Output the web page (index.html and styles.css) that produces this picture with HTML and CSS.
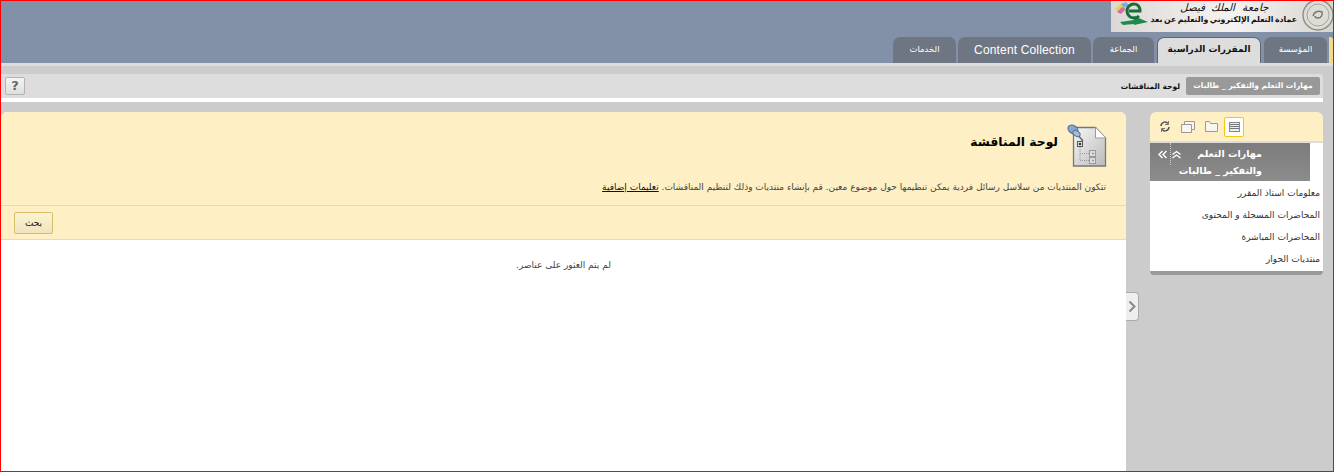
FILE: index.html

```html
<!DOCTYPE html>
<html lang="ar" dir="rtl">
<head>
<meta charset="utf-8">
<title>لوحة المناقشة</title>
<link rel="stylesheet" href="styles.css">
</head>
<body>
<div class="frame">

<div class="header">
  <div class="logo-row">
    <div class="logo">
      <svg class="seal" width="32" height="31" viewBox="0 0 32 31">
        <circle cx="17" cy="14" r="15" fill="#dedcd6" stroke="#8c8c84" stroke-width="1.4"/>
        <circle cx="17" cy="14" r="11" fill="none" stroke="#a5a59c"/>
        <path d="M12 15c1-4 5-6 9-4 1 3-1 6-4 6-2 0-3-1-3-2" fill="none" stroke="#77776f" stroke-width="1.400"/>
      </svg>
      <div class="logo-text">
        <div class="logo-uni">جامعة الملك فيصل</div>
        <div class="logo-dept">عمادة التعلم الإلكتروني والتعليم عن بعد</div>
      </div>
      <svg class="elogo" width="38" height="30" viewBox="0 0 38 30">
        <path d="M4 8l7-6 4 2-7 7z" fill="#e6d25a"/>
        <path d="M6 11l5-5 4 2-5 5z" fill="#d86aa8"/>
        <path d="M10 3l5-2 3 3-5 3z" fill="#6cb6d8"/>
        <path d="M9 21l14-2v-4l14 6-14 3v-1l-11 1z" fill="#1d8a4c"/>
        <path d="M18 10h11c0-4-2-7-6-7s-7 3-7 7 3 7 7 7c2 0 4-1 5-2" fill="none" stroke="#176e3a" stroke-width="3"/>
      </svg>
    </div>
  </div>
  <ul class="tabs">
    <li class="tab tab-stub"></li>
    <li class="tab tab-inst">المؤسسة</li>
    <li class="tab tab-active">المقررات الدراسية</li>
    <li class="tab tab-group">الجماعة</li>
    <li class="tab tab-cc">Content Collection</li>
    <li class="tab tab-serv">الخدمات</li>
  </ul>
</div>

<div class="strip"></div>
<div class="crumbs">
  <span class="crumb-course">مهارات التعلم والتفكير _ طالبات</span>
  <span class="crumb-page">لوحة المناقشات</span>
  <span class="help">?</span>
</div>
<div class="white-line"></div>

<div class="main">
  <div class="side">
    <div class="side-tools">
      <span class="tool tool-on">
        <svg width="11" height="10" viewBox="0 0 11 10"><rect x=".5" y=".5" width="10" height="9" fill="#eee" stroke="#888"/><path d="M1 2.500h9M1 4.500h9M1 6.500h9" stroke="#777" fill="none"/></svg>
      </span>
      <span class="tool">
        <svg width="13" height="11" viewBox="0 0 13 11"><path d="M.5 2.500V.5h4l1 2h7v8H.5z" fill="#f8f6ee" stroke="#999"/></svg>
      </span>
      <span class="tool">
        <svg width="14" height="12" viewBox="0 0 14 12"><path d="M3.500 3V.5h10v8H11" fill="#f8f6ee" stroke="#999"/><path d="M.5 3.500h10v8H.5z" fill="#f8f6ee" stroke="#999"/></svg>
      </span>
      <span class="tool">
        <svg width="10" height="11" viewBox="0 0 10 11"><path d="M1 5a4 4 0 0 1 7-2.500M9 6a4 4 0 0 1-7 2.500" fill="none" stroke="#555" stroke-width="1.500"/><path d="M8.500 0v3.500H5M1.500 11V7.500H5" fill="none" stroke="#777"/></svg>
      </span>
    </div>
    <div class="side-body">
      <div class="course-title">
        <div class="course-name">مهارات التعلم<br>والتفكير _ طالبات</div>
        <div class="course-ctrl">
          <svg class="ctrl-up" width="11" height="9" viewBox="0 0 11 9"><path d="M1.500 4.500l4-3 4 3M1.500 8l4-3 4 3" fill="none" stroke="#fff" stroke-width="1.400"/></svg>
          <span class="ctrl-side">
            <svg width="9" height="9" viewBox="0 0 9 9"><path d="M4.500 1l-3.500 3.500 3.500 3.500M8.500 1L5 4.500 8.500 8" fill="none" stroke="#fff" stroke-width="1.400"/></svg>
          </span>
        </div>
      </div>
      <ul class="side-menu">
        <li>معلومات استاذ المقرر</li>
        <li>المحاضرات المسجلة و المحتوى</li>
        <li>المحاضرات المباشرة</li>
        <li>منتديات الحوار</li>
      </ul>
    </div>
  </div>

  <div class="handle-col">
    <span class="handle">
      <svg width="8" height="13" viewBox="0 0 8 13"><path d="M1.500 1.500l5 5-5 5" fill="none" stroke="#888" stroke-width="2"/></svg>
    </span>
  </div>

  <div class="panel">
    <div class="panel-head">
      <div class="title-row">
        <svg class="board-icon" width="40" height="44" viewBox="0 0 40 44">
          <defs>
            <linearGradient id="sheet" x1="0" y1="0" x2="1" y2="1"><stop offset="0" stop-color="#f6f6f6"/><stop offset="1" stop-color="#bbb"/></linearGradient>
          </defs>
          <path d="M6.500 3.500h22l10 10.500v28h-32z" fill="url(#sheet)" stroke="#777" stroke-width="1.300"/>
          <path d="M28.500 3.500v10.500h10" fill="#fff" stroke="#999"/>
          <rect x="10.500" y="17.500" width="5" height="5" fill="#fff" stroke="#555"/>
          <path d="M11.500 20h3M13 18.500v3" stroke="#000"/>
          <path d="M13 23v14M13 29.500h9M13 36.500h9" stroke="#999" stroke-dasharray="1 1" fill="none"/>
          <rect x="22.500" y="26.500" width="6" height="6" fill="#ddd" stroke="#999"/>
          <rect x="22.500" y="33.500" width="6" height="6" fill="#ddd" stroke="#999"/>
          <path d="M25 29.500h2M26 28.500v2M25 36.500h2M26 35.500v2" stroke="#999"/>
          <path d="M10 10l6 7" stroke="#666" stroke-width="1.500"/>
          <ellipse cx="6" cy="5.500" rx="5.500" ry="4" transform="rotate(35 6 5.500)" fill="#86a6d0" stroke="#566f90"/>
          <ellipse cx="9.500" cy="9.500" rx="4" ry="2.500" transform="rotate(35 9.500 9.500)" fill="#a3bcd8" stroke="#566f90"/>
        </svg>
        <h1 class="page-title">لوحة المناقشة</h1>
      </div>
      <p class="page-note">تتكون المنتديات من سلاسل رسائل فردية يمكن تنظيمها حول موضوع معين. قم بإنشاء منتديات وذلك لتنظيم المناقشات. <a href="#">تعليمات إضافية</a></p>
    </div>
    <div class="action-bar">
      <button class="search-btn" type="button">بحث</button>
    </div>
    <div class="panel-body">
      <p class="empty">لم يتم العثور على عناصر.</p>
    </div>
  </div>
</div>

</div>
</body>
</html>
```

FILE: styles.css

```css
html, body { margin: 0; padding: 0; height: 100%; }
body { font-family: "DejaVu Sans", "Liberation Sans", sans-serif; font-size: 9px; color: #333; overflow: hidden; }
ul { list-style: none; margin: 0; padding: 0; }
h1, p { margin: 0; }

.frame {
  box-sizing: border-box;
  height: 472px;
  border: 1px solid #f00;
  display: flex;
  flex-direction: column;
  background: #ccc;
}

/* ----------- header ----------- */
.header { height: 62px; background: #8291a8; display: flex; flex-direction: column; justify-content: space-between; flex: none; }
.logo-row { display: flex; }
.logo {
  width: 222px;
  height: 31px;
  background: linear-gradient(to left, #d8d5d0, #f5f3f2 45%, #dcd8d6);
  display: flex;
  overflow: hidden;
}
.seal { flex: none; }
.logo-text { width: 146px; flex: none; margin-right: 4px; text-align: center; color: #111; }
.logo-uni { font-family: "DejaVu Serif", serif; font-size: 10.500px; line-height: 12px; font-style: italic; word-spacing: 3px; white-space: nowrap; }
.logo-dept { font-size: 7.800px; font-weight: bold; line-height: 14px; word-spacing: -1.200px; white-space: nowrap; }
.elogo { flex: none; margin-right: 2px; }

.tabs { display: flex; height: 26px; gap: 3px; }
.tab {
  box-sizing: border-box;
  background: #6e7683;
  color: #fff;
  border-radius: 7px 7px 0 0;
  text-align: center;
  line-height: 25px;
  font-size: 8.500px;
  white-space: nowrap;
}
.tab-stub { width: 4px; margin-left: -1px; background: #f4d98a; border-radius: 0 3px 0 0; }
.tab-inst { width: 63px; }
.tab-active { width: 104px; background: #ddd; color: #111; font-size: 9px; font-weight: bold; border: 1px solid #5f6771; border-bottom: 0; line-height: 23px; }
.tab-group { width: 61px; margin-left: -1px; }
.tab-cc { width: 133px; margin-left: -1px; font-family: "Liberation Sans", sans-serif; font-size: 12px; letter-spacing: .15px; line-height: 26px; }
.tab-serv { width: 63px; }

/* ----------- breadcrumb ----------- */
.strip { height: 11px; flex: none; background: #ccc; border-top: 3px solid #ddd; box-sizing: border-box; }
.crumbs {
  height: 24px;
  flex: none;
  background: #ddd;
  border-radius: 0 3px 0 0;
  margin-right: 10px;
  display: flex;
  align-items: center;
  padding: 0 3px 0 4px;
  color: #111;
  font-size: 7.500px;
  font-weight: bold;
}
.crumb-course { width: 134px; text-align: center; background: #999; color: #fff; border-radius: 2px; height: 18px; line-height: 18px; margin-left: 6px; white-space: nowrap; }
.help {
  margin-right: auto;
  width: 20px;
  height: 18px;
  box-sizing: border-box;
  border: 1px solid #b4b4b4;
  border-radius: 2px;
  background: linear-gradient(#f4f4f4, #dedede);
  color: #666;
  font: bold 13px/16px "DejaVu Sans", sans-serif;
  text-align: center;
}
.white-line { height: 4px; flex: none; background: #fff; margin-right: 10px; }

/* ----------- main ----------- */
.main { flex: 1; display: flex; min-height: 0; padding-top: 10px; }

.side { width: 173px; flex: none; margin-right: 10px; align-self: flex-start; }
.side-tools {
  height: 31px;
  background: #feefc4;
  border-radius: 6px 6px 0 0;
  display: flex;
  align-items: center;
  justify-content: flex-end;
  padding: 0 0 0 5px;
  gap: 3px;
  border-bottom: 2px solid #ddd;
  box-sizing: border-box;
}
.tool { width: 20px; height: 20px; display: flex; align-items: center; justify-content: center; box-sizing: border-box; }
.tool-on { border: 1px solid #f5c518; border-radius: 2px; background: #fff; }
.side-body { background: #fff; border-bottom: 4px solid #999; border-radius: 0 0 4px 4px; }
.course-title {
  margin-right: 13px;
  height: 38px;
  background: linear-gradient(#7c7c7c, #8c8c8c);
  color: #fff;
  display: flex;
  font-weight: bold;
  font-size: 9.500px;
  line-height: 17px;
}
.course-name { flex: 1; min-width: 0; padding: 2px 48px 0 0; white-space: nowrap; }
.course-ctrl { flex: none; display: flex; align-items: center; height: 22px; padding-left: 4px; }
.ctrl-up { flex: none; }
.ctrl-side { display: flex; align-items: center; justify-content: center; width: 17px; height: 22px; box-sizing: border-box; border-right: 1px dotted #ccc; }
.side-menu { padding: 1px 0; }
.side-menu li { height: 22px; line-height: 22px; padding-right: 3px; color: #333; font-size: 9px; white-space: nowrap; }

.handle-col { width: 24px; flex: none; }
.handle {
  display: flex;
  align-items: center;
  justify-content: center;
  width: 13px;
  height: 29px;
  margin-top: 180px;
  margin-right: 11px;
  background: #eee;
  border: 1px solid #aaa;
  border-left: 0;
  border-radius: 0 4px 4px 0;
  box-sizing: border-box;
}

.panel { flex: 1; min-width: 0; display: flex; flex-direction: column; background: #fff; border-radius: 6px 6px 0 0; }
.panel-head { background: #feefc4; height: 94px; padding: 12px 20px 0 0; box-sizing: border-box; border-bottom: 1px solid #eddc9e; border-radius: 6px 6px 0 0; }
.title-row { display: flex; align-items: center; height: 44px; }
.page-title { font-size: 12.300px; font-weight: bold; color: #000; margin: -8px 9px 0 0; }
.board-icon { flex: none; margin-right: -1px; }
.page-note { margin-top: 12px; font-size: 9px; line-height: 14px; color: #444; white-space: nowrap; }
.page-note a { color: #111; text-decoration: underline; }
.action-bar { height: 34px; flex: none; background: #feefc4; border-bottom: 1px solid #eddc9e; display: flex; align-items: center; box-sizing: border-box; }
.search-btn {
  margin-right: auto;
  margin-left: 13px;
  width: 39px;
  height: 22px;
  padding: 0;
  background: linear-gradient(#fdf3d2, #efe4bd);
  border: 1px solid #d9bd6a;
  border-radius: 2px;
  color: #111;
  font-family: inherit;
  font-size: 9px;
}
.panel-body { flex: 1; }
.empty { margin-top: 18px; text-align: center; font-size: 9px; color: #444; line-height: 14px; }
```
